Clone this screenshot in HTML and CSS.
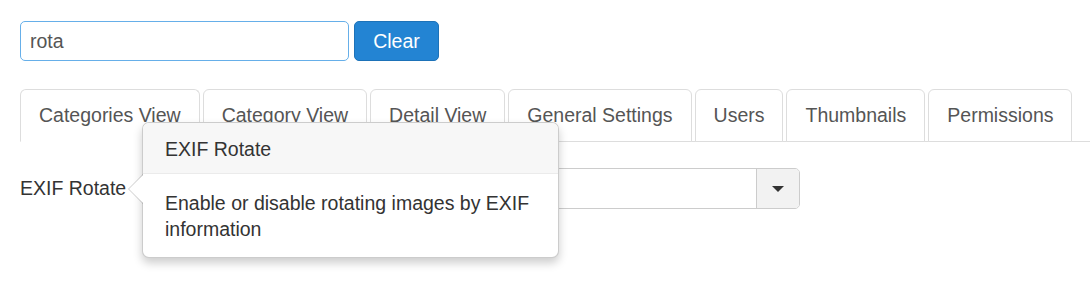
FILE: index.html
```html
<!DOCTYPE html>
<html lang="en">
<head>
    <meta charset="UTF-8">
    <title>Gallery Options</title>
    <link rel="stylesheet" href="styles.css">
</head>
<body>

<div class="page">
    <div class="search-row">
        <input type="text" class="search-input" value="rota">
        <button type="button" class="btn-clear">Clear</button>
    </div>

    <ul class="tabs">
        <li class="tab active">Categories View</li>
        <li class="tab">Category View</li>
        <li class="tab">Detail View</li>
        <li class="tab">General Settings</li>
        <li class="tab">Users</li>
        <li class="tab">Thumbnails</li>
        <li class="tab">Permissions</li>
    </ul>

    <div class="field-row">
        <label class="field-label">EXIF Rotate</label>
        <div class="select-box">
            <div class="select-value"></div>
            <div class="select-toggle"><span class="caret"></span></div>
        </div>

        <div class="popover">
            <div class="popover-arrow"></div>
            <div class="popover-title">EXIF Rotate</div>
            <div class="popover-content">Enable or disable rotating images by EXIF information</div>
        </div>
    </div>
</div>

</body>
</html>
```

FILE: styles.css
```css
* {
    box-sizing: border-box;
}
html, body {
    height: 100%;
}
body {
    margin: 0;
    min-height: 286px;
    font-family: "Liberation Sans", Arial, sans-serif;
    font-size: 19.5px;
    color: #333;
    background: #fff;
}
.page {
    min-height: 100%;
    padding: 21px 20px 0 20px;
}
.search-row {
    display: flex;
    gap: 5px;
}
.search-input {
    width: 329px;
    height: 40px;
    padding: 0 9px;
    border: 1px solid #66afe9;
    border-radius: 5px;
    font-family: inherit;
    font-size: 19.5px;
    color: #555;
    outline: none;
}
.btn-clear {
    width: 85px;
    height: 40px;
    border: 1px solid #1d72b8;
    border-radius: 5px;
    background: #2384d3;
    color: #fff;
    font-family: inherit;
    font-size: 19.5px;
    cursor: pointer;
}
.tabs {
    display: flex;
    list-style: none;
    margin: 28px -20px 0 0;
    padding: 0;
    border-bottom: 1px solid #ddd;
}
.tab {
    margin: 0 3px -1px 0;
    padding: 0 18px;
    height: 53px;
    line-height: 51px;
    border: 1px solid #ddd;
    border-radius: 6px 6px 0 0;
    color: #555;
    background: #fff;
}
.tab.active {
    border-bottom-color: #fff;
}
.field-row {
    position: relative;
    display: flex;
    align-items: center;
    margin-top: 26px;
}
.field-label {
    width: 140px;
    color: #333;
}
.select-box {
    display: flex;
    width: 640px;
    height: 41px;
    border: 1px solid #ccc;
    border-radius: 5px;
    overflow: hidden;
}
.select-value {
    flex: 1;
    background: #fff;
}
.select-toggle {
    width: 43px;
    border-left: 1px solid #ccc;
    background: #f2f2f2;
    display: flex;
    align-items: center;
    justify-content: center;
}
.caret {
    width: 0;
    height: 0;
    border-left: 6px solid transparent;
    border-right: 6px solid transparent;
    border-top: 6px solid #333;
}
.popover {
    position: absolute;
    left: 122px;
    top: -46px;
    width: 417px;
    background: #fff;
    border: 1px solid rgba(0, 0, 0, 0.2);
    border-radius: 7px;
    box-shadow: 0 5px 10px rgba(0, 0, 0, 0.2);
}
.popover-arrow {
    position: absolute;
    left: -15px;
    top: 51px;
    width: 0;
    height: 0;
    border-top: 15px solid transparent;
    border-bottom: 15px solid transparent;
    border-right: 15px solid rgba(0, 0, 0, 0.2);
}
.popover-arrow::after {
    content: "";
    position: absolute;
    left: 1px;
    top: -14px;
    border-top: 14px solid transparent;
    border-bottom: 14px solid transparent;
    border-right: 14px solid #fff;
}
.popover-title {
    padding: 12px 22px 10px 22px;
    line-height: 28px;
    background: #f7f7f7;
    border-bottom: 1px solid #ebebeb;
    border-radius: 6px 6px 0 0;
}
.popover-content {
    padding: 16px 22px 15px 22px;
    line-height: 26px;
}
```
